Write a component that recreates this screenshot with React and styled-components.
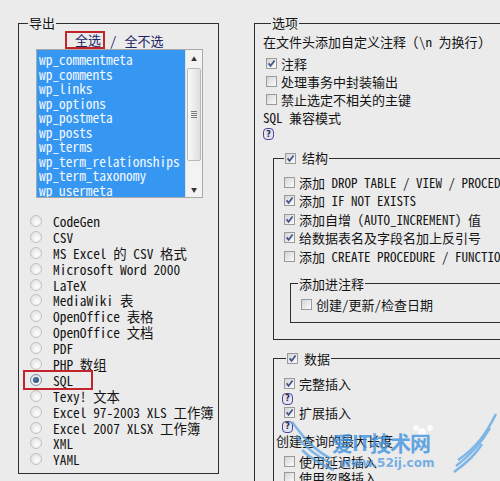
import React from "react";
import styled, { createGlobalStyle } from "styled-components";

const tables = [
  "wp_commentmeta",
  "wp_comments",
  "wp_links",
  "wp_options",
  "wp_postmeta",
  "wp_posts",
  "wp_terms",
  "wp_term_relationships",
  "wp_term_taxonomy",
  "wp_usermeta",
];

const formats = [
  "CodeGen",
  "CSV",
  "MS Excel 的 CSV 格式",
  "Microsoft Word 2000",
  "LaTeX",
  "MediaWiki 表",
  "OpenOffice 表格",
  "OpenOffice 文档",
  "PDF",
  "PHP 数组",
  "SQL",
  "Texy! 文本",
  "Excel 97-2003 XLS 工作簿",
  "Excel 2007 XLSX 工作簿",
  "XML",
  "YAML",
];

const structureOpts = [
  { label: "添加 DROP TABLE / VIEW / PROCEDURE / FUNCTION / EVENT", on: false },
  { label: "添加 IF NOT EXISTS", on: true },
  { label: "添加自增 (AUTO_INCREMENT) 值", on: true },
  { label: "给数据表名及字段名加上反引号", on: true },
  { label: "添加 CREATE PROCEDURE / FUNCTION / EVENT", on: false },
];

const Check = ({ on }) => (
  <Box>
    {on && (
      <svg width="9" height="9" viewBox="0 0 9 9">
        <path d="M1.6 4.4 L3.6 6.8 L7.6 1.6" stroke="#41548a" strokeWidth="1.7" fill="none" />
      </svg>
    )}
  </Box>
);

const Watermark = () => (
  <Mark>
    <svg width="210" height="72" viewBox="0 0 210 72">
      <g fill="none" stroke="#5aa6e6" strokeWidth="2.5" opacity="0.75">
        <path d="M2 14 C14 30 24 42 40 50" />
        <path d="M6 28 C16 40 26 48 42 56" />
        <path d="M12 42 C20 50 30 56 44 62" />
        <path d="M206 6 C196 26 186 40 168 52" />
        <path d="M200 20 C192 34 182 46 166 58" />
        <path d="M192 36 C186 46 178 54 164 64" />
      </g>
      <g fill="#fff" opacity="0.8">
        <circle cx="132" cy="24" r="4" />
        <circle cx="140" cy="20" r="3" />
        <circle cx="126" cy="20" r="3" />
      </g>
    </svg>
    <MarkTitle>爱IT技术网</MarkTitle>
    <MarkUrl>www.52ij.com</MarkUrl>
  </Mark>
);

const App = () => {
  return (
    <>
      <GlobalStyle />
      <Page>
        <ExportSet>
          <Legend $ml={9}>导出</Legend>
          <SelectAll>
            <Marked $w={40}>全选</Marked>
            <Slash>/</Slash>
            <span>全不选</span>
          </SelectAll>
          <TableList>
            <Items>
              {tables.map((t) => (
                <Item key={t}>{t}</Item>
              ))}
            </Items>
            <Scroll>
              <ArrowBtn>▲</ArrowBtn>
              <Track>
                <Thumb>
                  <Grip />
                </Thumb>
              </Track>
              <ArrowBtn>▼</ArrowBtn>
            </Scroll>
          </TableList>
          <Radios>
            {formats.map((f) => (
              <RadioRow key={f}>
                <RadioDot $on={f === "SQL"} />
                {f === "SQL" ? <SqlMark>{f}</SqlMark> : <span>{f}</span>}
              </RadioRow>
            ))}
          </Radios>
        </ExportSet>

        <OptionSet>
          <Legend $ml={8}>选项</Legend>
          <Line $h={18} $mt={1}>在文件头添加自定义注释 (\n 为换行)</Line>
          <Opts>
            <CheckRow $h={18} $ml={3}>
              <Check on />
              注释
            </CheckRow>
            <CheckRow $h={18} $ml={3}>
              <Check />
              处理事务中封装输出
            </CheckRow>
            <CheckRow $h={18} $ml={3}>
              <Check />
              禁止选定不相关的主键
            </CheckRow>
          </Opts>
          <Line $h={18}>SQL 兼容模式</Line>
          <Line $h={16}>
            <Help>?</Help>
          </Line>

          <SubSet $mt={7}>
            <CheckLegend $ml={10}>
              <Check on />
              结构
            </CheckLegend>
            <SubBody>
              {structureOpts.map((o) => (
                <CheckRow key={o.label} $h={18.5} $ml={10}>
                  <Check on={o.on} />
                  {o.label}
                </CheckRow>
              ))}
              <CommentSet>
                <Legend $ml={7}>添加进注释</Legend>
                <CheckRow $h={18} $ml={10}>
                  <Check />
                  创建/更新/检查日期
                </CheckRow>
              </CommentSet>
            </SubBody>
          </SubSet>

          <SubSet $mt={10}>
            <CheckLegend $ml={12}>
              <Check on />
              数据
            </CheckLegend>
            <DataBody>
              <CheckRow $h={16} $ml={8}>
                <Check on />
                完整插入
              </CheckRow>
              <Line $h={14} $ml={6}>
                <Help>?</Help>
              </Line>
              <CheckRow $h={14} $ml={8}>
                <Check on />
                扩展插入
              </CheckRow>
              <Line $h={14} $ml={6}>
                <Help>?</Help>
              </Line>
              <Line $h={14}>创建查询的最大长度</Line>
              <CheckRow $h={16} $ml={8} $mt={6}>
                <Check />
                使用延迟插入
              </CheckRow>
              <CheckRow $h={16} $ml={8}>
                <Check />
                使用忽略插入
              </CheckRow>
            </DataBody>
          </SubSet>
        </OptionSet>
        <Watermark />
      </Page>
    </>
  );
};

const GlobalStyle = createGlobalStyle`
  html, body {
    margin: 0;
    overflow: hidden;
    background: #ebebeb;
  }
  body {
    font-family: "Noto Sans Mono CJK SC", "Liberation Mono", "Noto Sans CJK SC", monospace;
    font-size: 13px;
    color: #141414;
  }
`;

const Page = styled.div`
  position: relative;
  display: flex;
  align-items: flex-start;
  gap: 35px;
  padding: 15px 0 0 18px;
  height: 481px;
  box-sizing: border-box;
  overflow: hidden;
`;

const Fieldset = styled.fieldset`
  margin: 0;
  padding: 0;
  min-width: 0;
  border: 1px solid #2e2e2e;
  box-sizing: border-box;
`;

const ExportSet = styled(Fieldset)`
  flex: none;
  width: 201px;
  padding-bottom: 6px;
`;

const OptionSet = styled(Fieldset)`
  flex: none;
  width: 320px;
  padding: 0 0 0 8px;
`;

const Legend = styled.legend`
  margin-left: ${(p) => p.$ml}px;
  padding: 0 1px;
  height: 16px;
  line-height: 16px;
  font-size: 13px;
`;

const CheckLegend = styled(Legend)`
  display: flex;
  align-items: center;
  gap: 6px;
  height: 18px;
  line-height: 18px;
`;

const SelectAll = styled.div`
  display: flex;
  align-items: center;
  height: 18px;
  padding-left: 46px;
  color: #1d2566;
`;

const Marked = styled.span`
  width: ${(p) => p.$w}px;
  height: 18px;
  box-sizing: border-box;
  border: 2px solid #c3242b;
  display: flex;
  align-items: center;
  justify-content: flex-end;
  padding-right: 2px;
  line-height: 14px;
`;

const Slash = styled.span`
  margin: 0 8px 0 5px;
`;

const TableList = styled.div`
  display: flex;
  margin-left: 17px;
  width: 167px;
  height: 149px;
  box-sizing: border-box;
  border: 1px solid #a9a9a9;
  background: #f2f2f2;
`;

const Items = styled.div`
  flex: 1;
  background: #3597f2;
  padding: 2px 0 0 2px;
  overflow: hidden;
`;

const Item = styled.div`
  height: 14.5px;
  line-height: 14.5px;
  font-size: 13.4px;
  color: #f4f8ff;
  white-space: nowrap;
`;

const Scroll = styled.div`
  flex: none;
  width: 16px;
  display: flex;
  flex-direction: column;
  background: #f3f3f3;
  border-left: 1px solid #e0e0e0;
`;

const ArrowBtn = styled.div`
  height: 16px;
  display: flex;
  align-items: center;
  justify-content: center;
  font-size: 6px;
  color: #333;
`;

const Track = styled.div`
  flex: 1;
  padding: 2px 1px 20px;
  display: flex;
  flex-direction: column;
`;

const Thumb = styled.div`
  flex: 1;
  border: 1px solid #b9b9b9;
  border-radius: 2px;
  background: linear-gradient(90deg, #fafafa, #dedede);
  display: flex;
  align-items: center;
  justify-content: center;
`;

const Grip = styled.div`
  width: 6px;
  height: 7px;
  background: repeating-linear-gradient(180deg, #7a7a7a 0 1px, transparent 1px 2px);
`;

const Radios = styled.div`
  margin-top: 15px;
  padding-left: 11px;
`;

const RadioRow = styled.div`
  display: flex;
  align-items: center;
  gap: 11px;
  height: 15.9px;
  font-size: 13.4px;
  line-height: 16px;
  white-space: nowrap;
`;

const RadioDot = styled.span`
  flex: none;
  width: 12px;
  height: 12px;
  border-radius: 50%;
  box-sizing: border-box;
  border: 1px solid ${(p) => (p.$on ? "#7d8fa6" : "#c2c2c2")};
  background: radial-gradient(circle at 60% 65%, #ffffff, #dadada);
  display: flex;
  align-items: center;
  justify-content: center;

  &::after {
    content: "";
    width: 6px;
    height: 6px;
    border-radius: 50%;
    background: ${(p) => (p.$on ? "radial-gradient(circle at 40% 40%, #4f7fb0, #18385e)" : "transparent")};
  }
`;

const SqlMark = styled.span`
  position: relative;
  left: -11px;
  margin-left: -19px;
  padding-left: 28px;
  width: 70px;
  height: 20px;
  box-sizing: border-box;
  border: 2px solid #c3242b;
  line-height: 16px;
`;

const Line = styled.div`
  display: flex;
  align-items: center;
  height: ${(p) => p.$h}px;
  margin-left: ${(p) => p.$ml || 0}px;
  margin-top: ${(p) => p.$mt || 0}px;
  white-space: nowrap;
`;

const Opts = styled.div`
  margin-top: 4px;
`;

const CheckRow = styled.div`
  display: flex;
  align-items: center;
  gap: 4px;
  height: ${(p) => p.$h}px;
  margin-left: ${(p) => p.$ml}px;
  margin-top: ${(p) => p.$mt || 0}px;
  white-space: nowrap;
`;

const Box = styled.span`
  flex: none;
  width: 11px;
  height: 11px;
  box-sizing: border-box;
  border: 1px solid #9a9a9a;
  background: linear-gradient(135deg, #d4d4d4 0%, #f6f6f6 85%);
  display: flex;
  align-items: center;
  justify-content: center;
`;

const Help = styled.span`
  display: inline-flex;
  align-items: center;
  justify-content: center;
  width: 9px;
  height: 10px;
  border: 1px solid #4b4796;
  border-radius: 4px;
  background: #e3e3f1;
  font: bold 8px "DejaVu Sans", sans-serif;
  color: #2a2a40;
`;

const SubSet = styled(Fieldset)`
  margin: ${(p) => p.$mt}px 0 0 10px;
  width: 300px;
`;

const SubBody = styled.div`
  padding: 6px 0 16px;
`;

const CommentSet = styled(Fieldset)`
  margin: 10px 0 0 16px;
  padding: 4px 0 8px;
`;

const DataBody = styled.div`
  padding: 8px 0 0 2px;
`;

const Mark = styled.div`
  position: absolute;
  left: 290px;
  top: 408px;
  width: 210px;
  height: 72px;
  pointer-events: none;

  svg {
    position: absolute;
    left: 0;
    top: 0;
  }
`;

const MarkTitle = styled.div`
  position: absolute;
  left: 42px;
  top: 22px;
  font: bold 21px "Noto Sans CJK SC", sans-serif;
  line-height: 24px;
  color: #3f93e0;
  opacity: 0.8;
  letter-spacing: -1px;
`;

const MarkUrl = styled.div`
  position: absolute;
  left: 50px;
  top: 48px;
  font: bold 12px "DejaVu Sans", sans-serif;
  color: #4f9be2;
  opacity: 0.75;
`;

export default App;
